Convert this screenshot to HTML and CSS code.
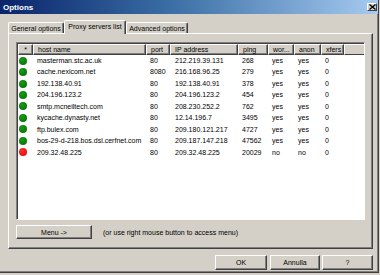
FILE: index.html
```html
<!DOCTYPE html>
<html lang="en">
<head>
    <meta charset="UTF-8">
    <title>Options</title>
    <link rel="stylesheet" href="styles.css">
</head>
<body>

<div class="window">
    <div class="titlebar">
        <span class="title">Options</span>
        <span class="close">
            <svg width="7" height="6" viewBox="0 0 7 6"><path d="M0.5 0.5 L6.5 5.5 M6.5 0.5 L0.5 5.5" stroke="#000" stroke-width="1.3"/></svg>
        </span>
    </div>

    <div class="tabs">
        <div class="tab tab-general">General options</div>
        <div class="tab tab-proxy active">Proxy servers list</div>
        <div class="tab tab-advanced">Advanced options</div>
    </div>

    <div class="panel">
        <div class="list">
            <div class="row head">
                <div class="cell star">*</div>
                <div class="cell">host name</div>
                <div class="cell">port</div>
                <div class="cell">IP address</div>
                <div class="cell">ping</div>
                <div class="cell">wor...</div>
                <div class="cell">anon</div>
                <div class="cell">xfers</div>
                <div class="cell fill"></div>
            </div>
            <div class="row">
                <div class="cell star"><span class="dot green"></span></div>
                <div class="cell">masterman.stc.ac.uk</div>
                <div class="cell">80</div>
                <div class="cell">212.219.39.131</div>
                <div class="cell">268</div>
                <div class="cell">yes</div>
                <div class="cell">yes</div>
                <div class="cell">0</div>
            </div>
            <div class="row">
                <div class="cell star"><span class="dot green"></span></div>
                <div class="cell">cache.nexicom.net</div>
                <div class="cell">8080</div>
                <div class="cell">216.168.96.25</div>
                <div class="cell">279</div>
                <div class="cell">yes</div>
                <div class="cell">yes</div>
                <div class="cell">0</div>
            </div>
            <div class="row">
                <div class="cell star"><span class="dot green"></span></div>
                <div class="cell">192.138.40.91</div>
                <div class="cell">80</div>
                <div class="cell">192.138.40.91</div>
                <div class="cell">378</div>
                <div class="cell">yes</div>
                <div class="cell">yes</div>
                <div class="cell">0</div>
            </div>
            <div class="row">
                <div class="cell star"><span class="dot green"></span></div>
                <div class="cell">204.196.123.2</div>
                <div class="cell">80</div>
                <div class="cell">204.196.123.2</div>
                <div class="cell">454</div>
                <div class="cell">yes</div>
                <div class="cell">yes</div>
                <div class="cell">0</div>
            </div>
            <div class="row">
                <div class="cell star"><span class="dot green"></span></div>
                <div class="cell">smtp.mcneiltech.com</div>
                <div class="cell">80</div>
                <div class="cell">208.230.252.2</div>
                <div class="cell">762</div>
                <div class="cell">yes</div>
                <div class="cell">yes</div>
                <div class="cell">0</div>
            </div>
            <div class="row">
                <div class="cell star"><span class="dot green"></span></div>
                <div class="cell">kycache.dynasty.net</div>
                <div class="cell">80</div>
                <div class="cell">12.14.196.7</div>
                <div class="cell">3495</div>
                <div class="cell">yes</div>
                <div class="cell">yes</div>
                <div class="cell">0</div>
            </div>
            <div class="row">
                <div class="cell star"><span class="dot green"></span></div>
                <div class="cell">ftp.bulex.com</div>
                <div class="cell">80</div>
                <div class="cell">209.180.121.217</div>
                <div class="cell">4727</div>
                <div class="cell">yes</div>
                <div class="cell">yes</div>
                <div class="cell">0</div>
            </div>
            <div class="row">
                <div class="cell star"><span class="dot green"></span></div>
                <div class="cell">bos-29-d-218.bos.dsl.cerfnet.com</div>
                <div class="cell">80</div>
                <div class="cell">209.187.147.218</div>
                <div class="cell">47562</div>
                <div class="cell">yes</div>
                <div class="cell">yes</div>
                <div class="cell">0</div>
            </div>
            <div class="row">
                <div class="cell star"><span class="dot red"></span></div>
                <div class="cell">209.32.48.225</div>
                <div class="cell">80</div>
                <div class="cell">209.32.48.225</div>
                <div class="cell">20029</div>
                <div class="cell">no</div>
                <div class="cell">no</div>
                <div class="cell">0</div>
            </div>
        </div>

        <div class="menu-row">
            <div class="btn menu-btn">Menu -&gt;</div>
            <span class="hint">(or use right mouse button to access menu)</span>
        </div>
    </div>

    <div class="buttons">
        <div class="btn btn-ok">OK</div>
        <div class="btn btn-cancel">Annulla</div>
        <div class="btn btn-help">?</div>
    </div>
</div>

</body>
</html>
```

FILE: styles.css
```css
body {
    margin: 0;
    background: #d4d0c8;
    font-family: "Liberation Sans", Arial, sans-serif;
    font-size: 7px;
    color: #000;
}

.window {
    box-sizing: border-box;
    width: 379px;
    height: 273px;
    background: #d4d0c8;
    border-right: 1px solid #404040;
    border-bottom: 1px solid #404040;
    box-shadow: inset -1px -1px #808080;
    display: flex;
    flex-direction: column;
}

.titlebar {
    height: 14px;
    background: linear-gradient(to right, #0a246a, #3a6ea5 45%, #a6caf0);
    display: flex;
    align-items: center;
    justify-content: space-between;
    padding: 0 1px 0 3px;
    flex-shrink: 0;
}

.title {
    color: #fff;
    font-weight: bold;
    font-size: 8px;
}

.close {
    box-sizing: border-box;
    width: 10px;
    height: 8px;
    background: #d4d0c8;
    border: 1px solid;
    border-color: #fff #404040 #404040 #fff;
    display: flex;
    align-items: center;
    justify-content: center;
}

.close svg {
    display: block;
}

/* tabs */
.tabs {
    display: flex;
    align-items: flex-end;
    height: 13px;
    margin: 6px 0 0 8px;
    position: relative;
    z-index: 1;
}

.tab {
    box-sizing: border-box;
    height: 11px;
    border: 1px solid;
    border-bottom: none;
    border-color: #fff #404040 #404040 #fff;
    border-radius: 2px 2px 0 0;
    box-shadow: inset -1px 0 #808080;
    display: flex;
    align-items: center;
    justify-content: center;
    white-space: nowrap;
}

.tab-general {
    width: 56px;
}

.tab-proxy {
    width: 62px;
}

.tab-advanced {
    width: 62px;
}

.tab.active {
    height: 14px;
    margin-bottom: -1px;
    background: #d4d0c8;
    padding-bottom: 2px;
}

/* panel */
.panel {
    box-sizing: border-box;
    width: 365px;
    height: 216px;
    margin-left: 8px;
    border: 1px solid;
    border-color: #fff #404040 #404040 #fff;
    box-shadow: inset -1px -1px #808080;
    padding: 8px 7px 0 7px;
}

.list {
    box-sizing: border-box;
    height: 178px;
    background: #fff;
    border: 1px solid;
    border-color: #808080 #fff #fff #808080;
    box-shadow: inset 1px 1px #404040;
    padding: 1px 0 0 1px;
}

.row {
    display: grid;
    grid-template-columns: 15px 113px 24px 68px 30px 26px 27px 23px 1fr;
    height: 11.45px;
    line-height: 11.45px;
}

.row.head {
    height: 11px;
    line-height: 10px;
}

.cell {
    padding-left: 4px;
    white-space: nowrap;
    overflow: hidden;
}

.row:not(.head) .cell:nth-child(4) {
    padding-left: 5px;
}

.head .cell {
    box-sizing: border-box;
    background: #d4d0c8;
    border-top: 1px solid #fff;
    border-left: 1px solid #fff;
    border-right: 1px solid #404040;
    border-bottom: 1px solid #404040;
    box-shadow: inset -1px -1px #808080;
}

.head .star {
    text-align: center;
    padding-left: 0;
}

.head .fill {
    border-right: none;
    box-shadow: none;
    border-bottom-color: #404040;
}

.row:not(.head) .star {
    padding-left: 1px;
    display: flex;
    align-items: center;
}

.dot {
    display: block;
    width: 8px;
    height: 8px;
    border-radius: 50%;
}

.dot.green {
    background: radial-gradient(circle at 40% 35%, #1a9a1a, #006a00);
}

.dot.red {
    background: radial-gradient(circle at 40% 35%, #ff3030, #e00000);
}

/* menu row */
.menu-row {
    display: flex;
    align-items: center;
    margin-top: 5px;
    gap: 11px;
}

.btn {
    box-sizing: border-box;
    height: 14px;
    background: #d4d0c8;
    border: 1px solid;
    border-color: #fff #404040 #404040 #fff;
    box-shadow: inset -1px -1px #808080;
    display: flex;
    align-items: center;
    justify-content: center;
}

.menu-btn {
    width: 76px;
}

/* dialog buttons */
.buttons {
    display: flex;
    justify-content: flex-end;
    gap: 2px;
    margin: 6px 5px 0 0;
}

.buttons .btn {
    height: 15px;
}

.btn-ok {
    width: 52px;
    margin-right: 1px;
}

.btn-cancel {
    width: 50px;
}

.btn-help {
    width: 51px;
}
```
